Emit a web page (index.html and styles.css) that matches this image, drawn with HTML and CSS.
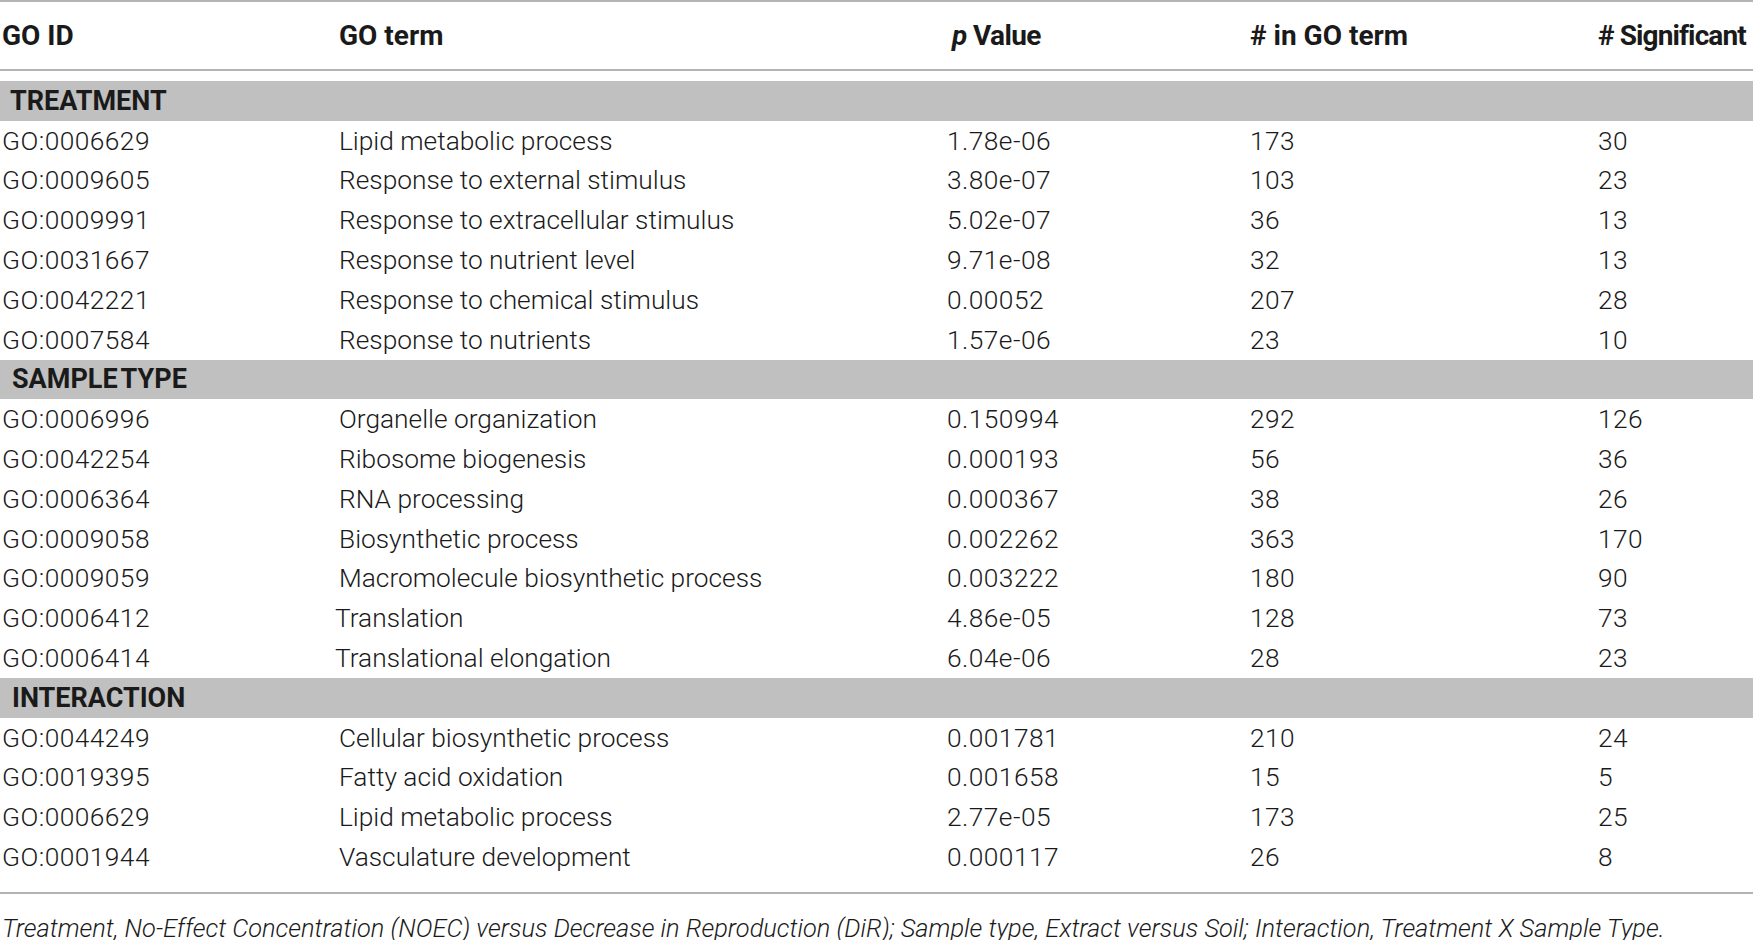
FILE: index.html
```html
<!DOCTYPE html>
<html>
<head>
<meta charset="utf-8">
<link rel="stylesheet" href="styles.css">
</head>
<body>
<div class="page">
  <div class="table">
    <div class="row head">
      <div class="c c1">GO ID</div>
      <div class="c c2">GO term</div>
      <div class="c c3"><i>p</i> Value</div>
      <div class="c c4"># in GO term</div>
      <div class="c c5"># Significant</div>
    </div>
    <div class="body">
      <div class="row section"><div class="c">TREATMENT</div></div>
      <div class="row"><div class="c c1">GO:0006629</div><div class="c c2">Lipid metabolic process</div><div class="c c3">1.78e-06</div><div class="c c4">173</div><div class="c c5">30</div></div>
      <div class="row"><div class="c c1">GO:0009605</div><div class="c c2">Response to external stimulus</div><div class="c c3">3.80e-07</div><div class="c c4">103</div><div class="c c5">23</div></div>
      <div class="row"><div class="c c1">GO:0009991</div><div class="c c2">Response to extracellular stimulus</div><div class="c c3">5.02e-07</div><div class="c c4">36</div><div class="c c5">13</div></div>
      <div class="row"><div class="c c1">GO:0031667</div><div class="c c2">Response to nutrient level</div><div class="c c3">9.71e-08</div><div class="c c4">32</div><div class="c c5">13</div></div>
      <div class="row"><div class="c c1">GO:0042221</div><div class="c c2">Response to chemical stimulus</div><div class="c c3">0.00052</div><div class="c c4">207</div><div class="c c5">28</div></div>
      <div class="row"><div class="c c1">GO:0007584</div><div class="c c2">Response to nutrients</div><div class="c c3">1.57e-06</div><div class="c c4">23</div><div class="c c5">10</div></div>
      <div class="row section"><div class="c s2">SAMPLE TYPE</div></div>
      <div class="row"><div class="c c1">GO:0006996</div><div class="c c2">Organelle organization</div><div class="c c3">0.150994</div><div class="c c4">292</div><div class="c c5">126</div></div>
      <div class="row"><div class="c c1">GO:0042254</div><div class="c c2">Ribosome biogenesis</div><div class="c c3">0.000193</div><div class="c c4">56</div><div class="c c5">36</div></div>
      <div class="row"><div class="c c1">GO:0006364</div><div class="c c2">RNA processing</div><div class="c c3">0.000367</div><div class="c c4">38</div><div class="c c5">26</div></div>
      <div class="row"><div class="c c1">GO:0009058</div><div class="c c2">Biosynthetic process</div><div class="c c3">0.002262</div><div class="c c4">363</div><div class="c c5">170</div></div>
      <div class="row"><div class="c c1">GO:0009059</div><div class="c c2">Macromolecule biosynthetic process</div><div class="c c3">0.003222</div><div class="c c4">180</div><div class="c c5">90</div></div>
      <div class="row"><div class="c c1">GO:0006412</div><div class="c c2 shift">Translation</div><div class="c c3">4.86e-05</div><div class="c c4">128</div><div class="c c5">73</div></div>
      <div class="row"><div class="c c1">GO:0006414</div><div class="c c2 shift">Translational elongation</div><div class="c c3">6.04e-06</div><div class="c c4">28</div><div class="c c5">23</div></div>
      <div class="row section"><div class="c s2">INTERACTION</div></div>
      <div class="row"><div class="c c1">GO:0044249</div><div class="c c2">Cellular biosynthetic process</div><div class="c c3">0.001781</div><div class="c c4">210</div><div class="c c5">24</div></div>
      <div class="row"><div class="c c1">GO:0019395</div><div class="c c2">Fatty acid oxidation</div><div class="c c3">0.001658</div><div class="c c4">15</div><div class="c c5">5</div></div>
      <div class="row"><div class="c c1">GO:0006629</div><div class="c c2">Lipid metabolic process</div><div class="c c3">2.77e-05</div><div class="c c4">173</div><div class="c c5">25</div></div>
      <div class="row"><div class="c c1">GO:0001944</div><div class="c c2">Vasculature development</div><div class="c c3">0.000117</div><div class="c c4">26</div><div class="c c5">8</div></div>
    </div>
  </div>
  <p class="note">Treatment, No-Effect Concentration (NOEC) versus Decrease in Reproduction (DiR); Sample type, Extract versus Soil; Interaction, Treatment X Sample Type.</p>
</div>
</body>
</html>
```
FILE: styles.css
```css
html, body {
  margin: 0;
  padding: 0;
  background: #fff;
}
.page {
  width: 1753px;
  height: 940px;
  overflow: hidden;
  font-family: Roboto, "Liberation Sans", sans-serif;
  color: #1a1a1a;
}
.table {
  border-top: 2px solid #b4b4b4;
  border-bottom: 2px solid #b4b4b4;
  padding-bottom: 15px;
}
.row {
  display: grid;
  grid-template-columns: 337px 608px 303px 348px 1fr;
  height: 39.8px;
  align-items: center;
  font-size: 26.3px;
  font-weight: 300;
  white-space: nowrap;
}
.c {
  padding-left: 2px;
  overflow: hidden;
}
.c1, .c3, .c4, .c5 {
  letter-spacing: 0.45px;
}
.head {
  height: 67px;
  font-weight: 700;
  font-size: 28px;
  letter-spacing: 0;
  border-bottom: 2px solid #b4b4b4;
  margin-bottom: 10px;
}
.head .c {
  letter-spacing: 0;
}
.head .c3 {
  padding-left: 7px;
  letter-spacing: -0.6px;
}
.head .c5 {
  letter-spacing: -0.9px;
  overflow: visible;
}
.section {
  background: #c0c0c0;
  display: flex;
  font-weight: 700;
  font-size: 27px;
  letter-spacing: 0;
}
.section .c {
  padding-left: 10px;
}
.section .s2 {
  padding-left: 12px;
  word-spacing: -3px;
}
.shift {
  margin-left: -4px;
}
.note {
  margin: 0;
  padding: 19px 0 0 2px;
  font-size: 25.4px;
  line-height: 30px;
  font-style: italic;
  font-weight: 300;
  white-space: nowrap;
}
```
